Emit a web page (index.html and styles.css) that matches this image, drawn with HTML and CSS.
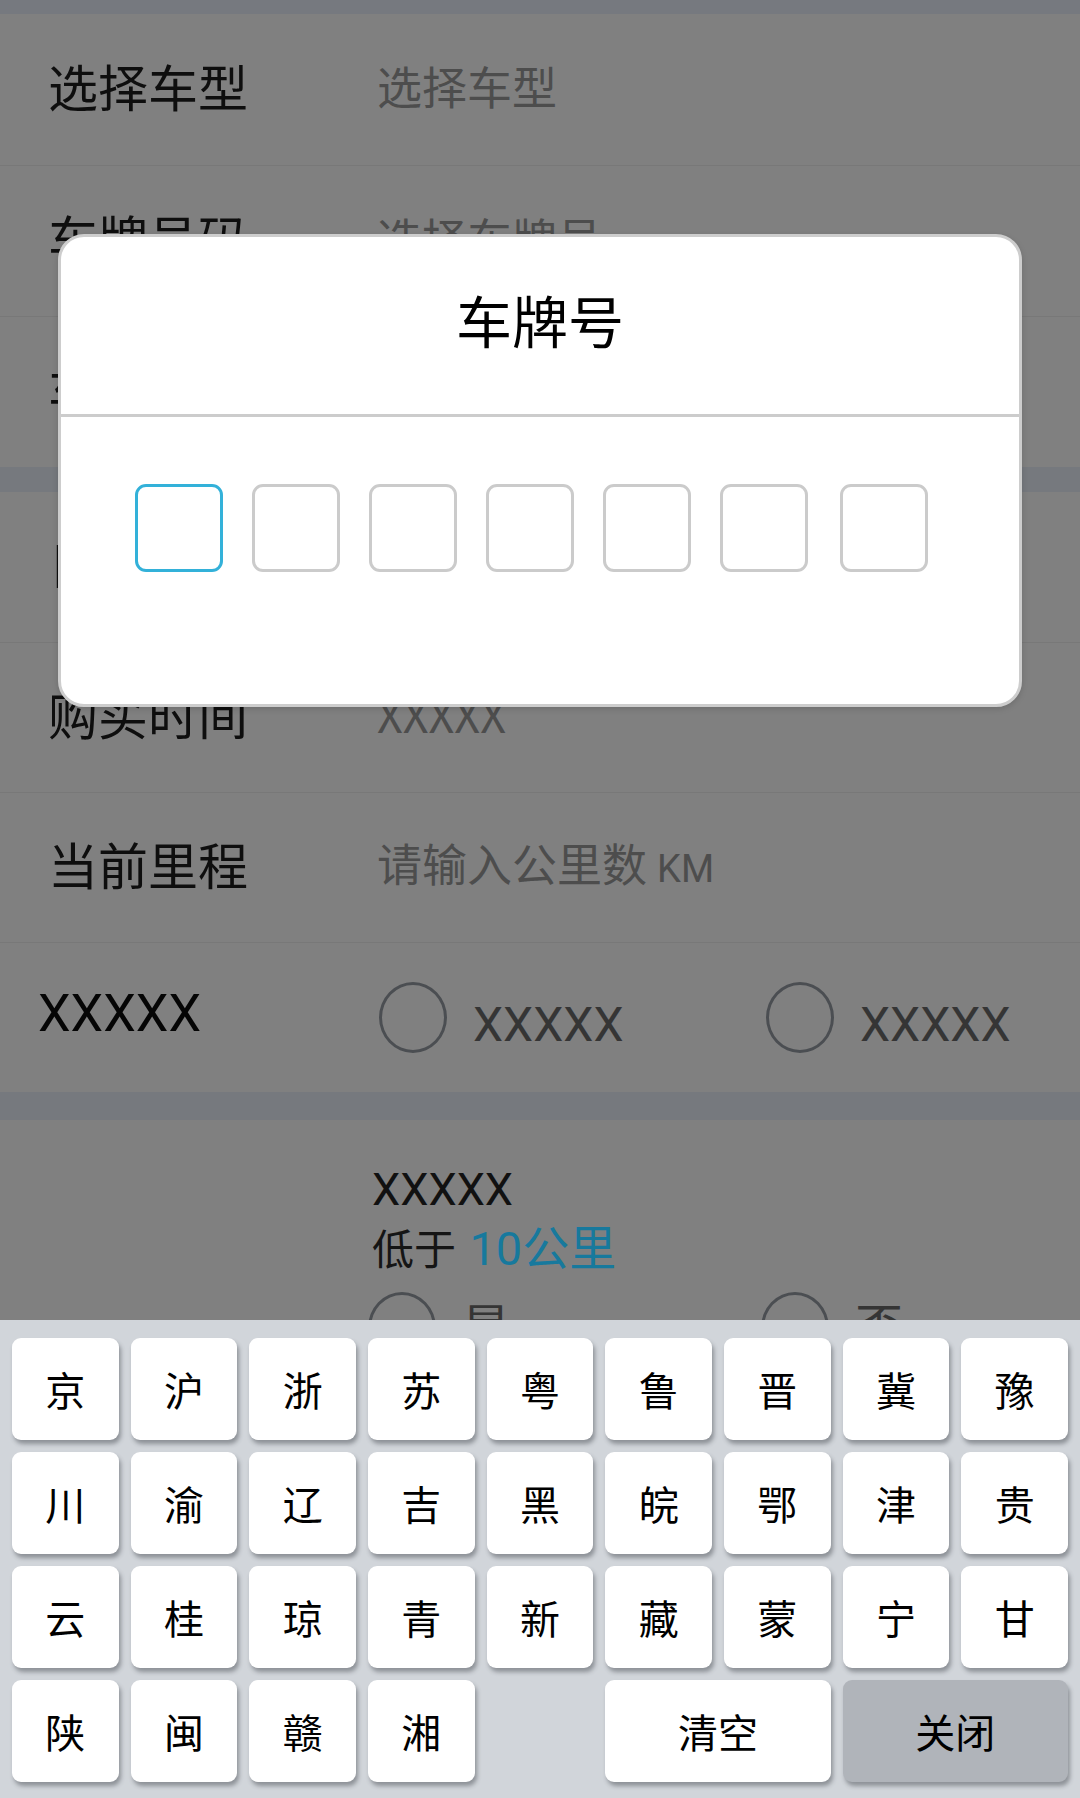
FILE: index.html
```html
<!DOCTYPE html>
<html lang="zh-CN">
<head>
<meta charset="utf-8">
<title>车牌号</title>
<link rel="stylesheet" href="styles.css">
</head>
<body>
<div class="page">
  <div class="statusbar"></div>

  <section class="group group--tall">
    <div class="row"><span class="label">选择车型</span><span class="value">选择车型</span></div>
    <div class="row"><span class="label">车牌号码</span><span class="value">选择车牌号</span></div>
    <div class="row"><span class="label">车架号码</span><span class="value">请输入车架号</span></div>
  </section>

  <div class="band"></div>

  <section class="group">
    <div class="row"><span class="label">日常用途</span><span class="value">XXXXX</span></div>
    <div class="row"><span class="label">购买时间</span><span class="value">XXXXX</span></div>
    <div class="row"><span class="label">当前里程</span><span class="value">请输入公里数 <span class="unit">KM</span></span></div>
    <div class="row row--choice">
      <span class="label label--latin">XXXXX</span>
      <div class="choices">
        <span class="choice"><span class="circle"></span><span class="choice-text">XXXXX</span></span>
        <span class="choice"><span class="circle"></span><span class="choice-text">XXXXX</span></span>
      </div>
    </div>
  </section>

  <div class="band band--wide"></div>

  <section class="question">
    <p class="q-title">XXXXX</p>
    <p class="q-sub">低于 <span class="accent">10公里</span></p>
    <div class="choices choices--q">
      <span class="choice"><span class="circle"></span><span class="choice-text">是</span></span>
      <span class="choice"><span class="circle"></span><span class="choice-text">否</span></span>
    </div>
  </section>
</div>

<div class="dialog">
  <div class="dialog-head">车牌号</div>
  <div class="dialog-body">
    <span class="slot slot--active"></span>
    <span class="slot"></span>
    <span class="slot"></span>
    <span class="slot"></span>
    <span class="slot"></span>
    <span class="slot"></span>
    <span class="slot slot--extra"></span>
  </div>
</div>

<div class="keyboard">
  <button class="key">京</button><button class="key">沪</button><button class="key">浙</button><button class="key">苏</button><button class="key">粤</button><button class="key">鲁</button><button class="key">晋</button><button class="key">冀</button><button class="key">豫</button>
  <button class="key">川</button><button class="key">渝</button><button class="key">辽</button><button class="key">吉</button><button class="key">黑</button><button class="key">皖</button><button class="key">鄂</button><button class="key">津</button><button class="key">贵</button>
  <button class="key">云</button><button class="key">桂</button><button class="key">琼</button><button class="key">青</button><button class="key">新</button><button class="key">藏</button><button class="key">蒙</button><button class="key">宁</button><button class="key">甘</button>
  <button class="key">陕</button><button class="key">闽</button><button class="key">赣</button><button class="key">湘</button>
  <button class="key key--clear">清空</button>
  <button class="key key--close">关闭</button>
</div>
</body>
</html>
```

FILE: styles.css
```css
* { box-sizing: border-box; }

html, body {
  margin: 0;
  padding: 0;
  width: 1080px;
  height: 1798px;
  overflow: hidden;
  background: #808080;
  font-family: "Roboto", "Noto Sans CJK SC", sans-serif;
}

.page {
  width: 1080px;
  height: 1798px;
  overflow: hidden;
  background: #808080;
}

.statusbar {
  height: 14px;
  background: #76797f;
}

.group .row + .row {
  border-top: 1px solid #787878;
}

.row {
  height: 150px;
  display: flex;
  align-items: center;
  padding-left: 48px;
}

.group--tall .row {
  height: 151px;
}

.label {
  width: 329px;
  flex: none;
  font-family: "Noto Sans CJK SC", sans-serif;
  font-size: 50px;
  color: #0e0e0e;
  line-height: 1;
  margin-top: -10px;
}

.value {
  font-family: "Noto Sans CJK SC", sans-serif;
  font-size: 45px;
  color: #4d4d4d;
  line-height: 1;
  margin-top: -8px;
}

.unit {
  font-family: "Roboto", sans-serif;
  font-size: 38px;
}

.band {
  height: 25px;
  background: #76797e;
}

.band--wide {
  height: 28px;
}

.row--choice {
  padding-left: 38px;
}

.label--latin {
  width: 341px;
  font-family: "Roboto", sans-serif;
  font-size: 52px;
  color: #050505;
  margin-top: -8px;
}

.choices {
  display: flex;
  min-width: 0;
}

.choice {
  flex: none;
  width: 387px;
  display: flex;
  align-items: center;
}

.choice:last-child {
  width: auto;
}

.circle {
  width: 68px;
  height: 71px;
  border: 3px solid #4b4e52;
  border-radius: 50%;
  flex: none;
  margin-right: 26px;
}

.choice-text {
  font-family: "Roboto", "Noto Sans CJK SC", sans-serif;
  font-size: 48px;
  color: #353535;
  line-height: 1;
  margin-top: 14px;
}

.question {
  padding: 42px 0 0 372px;
}

.q-title {
  margin: 0;
  font-family: "Roboto", sans-serif;
  font-size: 45px;
  line-height: 56px;
  color: #111;
}

.q-sub {
  margin: 0;
  font-family: "Noto Sans CJK SC", sans-serif;
  font-size: 42px;
  line-height: 58px;
  color: #151515;
}

.accent {
  font-family: "Roboto", "Noto Sans CJK SC", sans-serif;
  font-size: 47px;
  margin-left: 4px;
  color: #17799d;
}

.choices--q {
  margin-top: 14px;
  margin-left: -4px;
}

.choices--q .choice:first-child {
  width: 393px;
}

.choices--q .choice-text {
  margin-top: 0;
}

/* dialog */
.dialog {
  position: absolute;
  left: 58px;
  top: 234px;
  width: 964px;
  height: 473px;
  background: #fff;
  border: 3px solid #cdcdcd;
  border-radius: 26px;
  box-shadow: 0 2px 6px rgba(0, 0, 0, 0.15);
}

.dialog-head {
  height: 180px;
  display: flex;
  align-items: center;
  justify-content: center;
  font-family: "Noto Sans CJK SC", sans-serif;
  font-size: 56px;
  color: #000;
  border-bottom: 3px solid #cccccc;
  padding-bottom: 14px;
}

.dialog-body {
  display: flex;
  gap: 29px;
  padding: 67px 0 0 74px;
}

.slot {
  width: 88px;
  height: 88px;
  border: 3px solid #cbcbcb;
  border-radius: 11px;
}

.slot--active {
  border-color: #33b1d9;
}

.slot--extra {
  margin-left: 3px;
}

/* keyboard */
.keyboard {
  position: absolute;
  left: 0;
  bottom: 0;
  width: 1080px;
  height: 478px;
  background: #d1d5da;
  padding: 18px 12px 16px;
  display: grid;
  grid-template-columns: repeat(9, 1fr);
  grid-auto-rows: 102px;
  column-gap: 12px;
  row-gap: 12px;
}

.key {
  border: none;
  margin: 0;
  padding: 0;
  background: #fff;
  border-radius: 9px;
  box-shadow: 2px 4px 4px rgba(60, 64, 70, 0.45);
  font-family: "Noto Sans CJK SC", sans-serif;
  font-size: 40px;
  color: #000;
  display: flex;
  align-items: center;
  justify-content: center;
}

.key--clear {
  grid-column: 6 / span 2;
}

.key--close {
  grid-column: 8 / span 2;
  background: #b0b4ba;
}
```
